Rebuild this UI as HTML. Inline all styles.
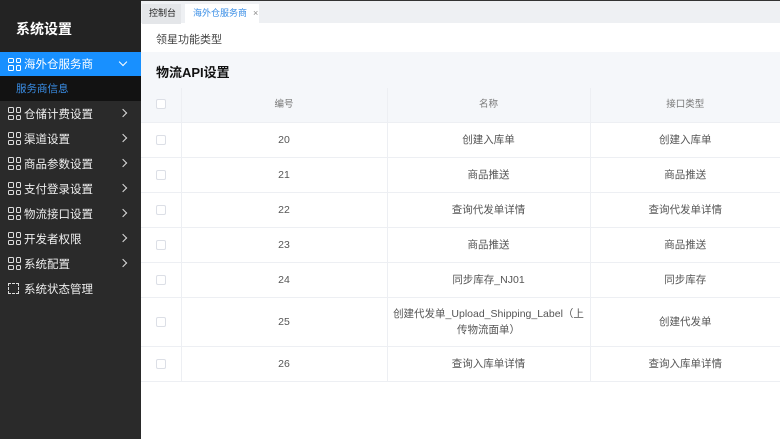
<!DOCTYPE html>
<html><head><meta charset="utf-8"><style>
*{margin:0;padding:0;box-sizing:border-box}
body{width:780px;height:439px;overflow:hidden;font-family:"Liberation Sans","Noto Sans CJK SC",sans-serif;background:#fff;position:relative}
.sb{position:absolute;left:0;top:0;width:141px;height:439px;background:#2a2a2a;color:#fff}
.sb .t{height:52px;background:#232323;font-size:14px;font-weight:bold;padding:19px 0 0 16px}
.it{height:25px;font-size:11.5px;display:flex;align-items:center;padding-left:8px;position:relative;color:#eee}
.it.a{background:#1890ff;color:#fff;height:24px}
.it.s{background:#121212;color:#3a8ee6;padding-left:16px;font-size:10.5px}
.ic{width:13px;height:13px;margin-right:3px;display:inline-grid;grid-template-columns:5.5px 5.5px;gap:2px}
.ic i{border:1.2px solid #ddd;border-radius:1.5px;display:block}
.it.a .ic i{border-color:#fff}
.ar{position:absolute;right:15px;top:9px;width:6px;height:6px;border-right:1.6px solid #ddd;border-top:1.6px solid #ddd;transform:rotate(45deg)}
.ar.d{transform:rotate(135deg);top:7px;border-color:#fff}
.tabs{position:absolute;left:141px;top:0;width:639px;height:23px;background:#eef0f3;border-top:1px solid #333}
.tab{position:absolute;top:3px;height:20px;font-size:9px;line-height:19px;white-space:nowrap}
.main{position:absolute;left:141px;top:23px;width:639px}
.lk{height:29px;font-size:11px;color:#444;padding:8px 0 0 15px}
.band{height:36px;background:#f5f7fa;font-size:13px;font-weight:bold;color:#111;padding:10px 0 0 15px}
table{border-collapse:collapse;width:639px;font-size:10.5px;color:#555;table-layout:fixed}
td{border-bottom:1px solid #edeff3;border-left:1px solid #edeff3;text-align:center;height:35px;padding:0 4px;vertical-align:middle;line-height:14px}
td:first-child{border-left:none;width:40px;padding:0}
tr.h td{background:#f5f7fa;color:#777;height:34px;font-size:9.5px}
.cb{display:inline-block;width:10px;height:10px;border:1px solid #dcdfe6;border-radius:2px;background:#fff;vertical-align:middle}
</style></head><body>
<div class="sb">
<div class="t">系统设置</div>
<div class="it a"><span class="ic"><i></i><i></i><i></i><i></i></span>海外仓服务商<span class="ar d"></span></div>
<div class="it s">服务商信息</div>
<div class="it"><span class="ic"><i></i><i></i><i></i><i></i></span>仓储计费设置<span class="ar"></span></div>
<div class="it"><span class="ic"><i></i><i></i><i></i><i></i></span>渠道设置<span class="ar"></span></div>
<div class="it"><span class="ic"><i></i><i></i><i></i><i></i></span>商品参数设置<span class="ar"></span></div>
<div class="it"><span class="ic"><i></i><i></i><i></i><i></i></span>支付登录设置<span class="ar"></span></div>
<div class="it"><span class="ic"><i></i><i></i><i></i><i></i></span>物流接口设置<span class="ar"></span></div>
<div class="it"><span class="ic"><i></i><i></i><i></i><i></i></span>开发者权限<span class="ar"></span></div>
<div class="it"><span class="ic"><i></i><i></i><i></i><i></i></span>系统配置<span class="ar"></span></div>
<div class="it"><span class="ic" style="display:inline-block;border:1.2px dashed #ddd;width:11px;height:11px;margin-right:5px"></span>系统状态管理</div>
</div>
<div class="tabs">
<div class="tab" style="left:1px;width:39px;background:#e4e6e9;color:#222;padding-left:7px">控制台</div>
<div class="tab" style="left:44px;width:74px;background:#fff;color:#3a8ee6;padding-left:8px">海外仓服务商<span style="color:#888;margin-left:6px">×</span></div>
</div>
<div class="main">
<div class="lk">领星功能类型</div>
<div class="band">物流API设置</div>
<table>
<colgroup><col style="width:40px"><col style="width:206px"><col style="width:203px"><col></colgroup>
<tr class="h"><td><span class="cb"></span></td><td>编号</td><td>名称</td><td>接口类型</td></tr>
<tr><td><span class="cb"></span></td><td>20</td><td>创建入库单</td><td>创建入库单</td></tr>
<tr><td><span class="cb"></span></td><td>21</td><td>商品推送</td><td>商品推送</td></tr>
<tr><td><span class="cb"></span></td><td>22</td><td>查询代发单详情</td><td>查询代发单详情</td></tr>
<tr><td><span class="cb"></span></td><td>23</td><td>商品推送</td><td>商品推送</td></tr>
<tr><td><span class="cb"></span></td><td>24</td><td>同步库存_NJ01</td><td>同步库存</td></tr>
<tr><td style="height:49px"><span class="cb"></span></td><td>25</td><td style="line-height:16px">创建代发单_Upload_Shipping_Label（上传物流面单）</td><td>创建代发单</td></tr>
<tr><td><span class="cb"></span></td><td>26</td><td>查询入库单详情</td><td>查询入库单详情</td></tr>
</table>
</div>
</body></html>
